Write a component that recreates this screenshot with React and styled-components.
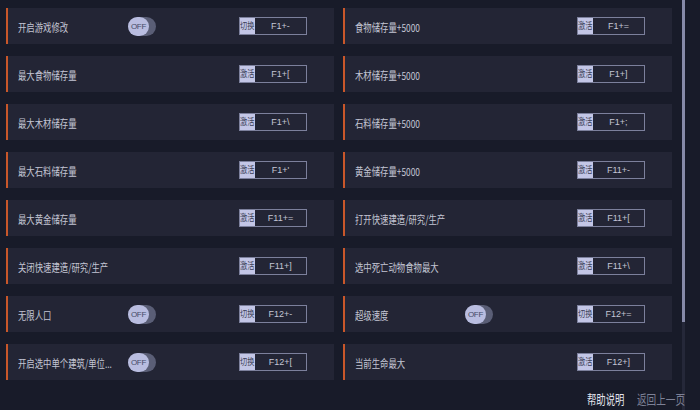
import React from 'react'
import styled, { createGlobalStyle } from 'styled-components'

const GlobalStyle = createGlobalStyle`
html, body {
    margin: 0;
    padding: 0;
    background: #181b29;
}
body {
    font-family: "Noto Sans CJK SC", "Noto Sans", sans-serif;
}
`

const Page = styled.div`
width: 700px;
height: 410px;
display: flex;
flex-direction: column;
background: #181b29;
overflow: hidden;
`

const Main = styled.div`
display: flex;
height: 385px;
`

const Grid = styled.div`
display: grid;
grid-template-columns: 328px 329px;
grid-auto-rows: 36px;
column-gap: 9px;
row-gap: 12px;
padding: 8px 0 0 6px;
`

const Scrollbar = styled.div`
margin-left: 10px;
width: 3px;
height: 410px;
background: #252839;
display: flex;
flex-direction: column;
`

const Thumb = styled.div`
height: 322px;
background: #868aa8;
`

const Row = styled.div`
display: flex;
align-items: center;
background: #232535;
`

const Bar = styled.div`
width: 2px;
align-self: stretch;
background: #c9572a;
`

const Label = styled.div`
width: 110px;
padding-left: 10px;
margin-top: -2px;
flex-shrink: 0;
white-space: nowrap;
`

const Squeeze = styled.span`
display: inline-block;
white-space: nowrap;
font-size: ${p => p.size || 11}px;
color: ${p => p.color || '#c4c6d4'};
transform: scaleX(${p => p.sx || 0.76});
transform-origin: left center;
line-height: 1;
`

const Toggle = styled.div`
width: 28px;
height: 19px;
border-radius: 10px;
background: #5a5e76;
display: flex;
align-items: center;
`

const Knob = styled.div`
width: 21px;
height: 19px;
border-radius: 10px;
background: #b9bde0;
display: flex;
align-items: center;
justify-content: center;
font-size: 8px;
color: #454a66;
font-family: "Liberation Sans", sans-serif;
letter-spacing: -0.3px;
`

const Hotkey = styled.div`
margin-left: auto;
margin-right: 27px;
width: 68px;
height: 18px;
display: flex;
border: 1px solid #7c809c;
box-sizing: border-box;
`

const HotkeyTag = styled.div`
width: 15px;
background: #c3c6e6;
display: flex;
align-items: center;
white-space: nowrap;
`

const HotkeyKeys = styled.div`
flex: 1;
display: flex;
align-items: center;
justify-content: center;
font-family: "Liberation Sans", sans-serif;
font-size: 9px;
color: #c4c6d4;
`

const Footer = styled.div`
flex: 1;
display: flex;
justify-content: flex-end;
align-items: center;
gap: 13px;
padding-right: 15px;
padding-bottom: 6px;
`

const FooterLink = styled.div`
width: ${p => p.w}px;
white-space: nowrap;
`

const left = [
    { name: '开启游戏修改', toggle: true, tag: '切换', key: 'F1+-' },
    { name: '最大食物储存量', tag: '激活', key: 'F1+[' },
    { name: '最大木材储存量', tag: '激活', key: 'F1+\\' },
    { name: '最大石料储存量', tag: '激活', key: "F1+'" },
    { name: '最大黄金储存量', tag: '激活', key: 'F11+=' },
    { name: '关闭快速建造/研究/生产', tag: '激活', key: 'F11+]' },
    { name: '无限人口', toggle: true, tag: '切换', key: 'F12+-' },
    { name: '开启选中单个建筑/单位...', toggle: true, tag: '切换', key: 'F12+[' },
]

const right = [
    { name: '食物储存量+5000', tag: '激活', key: 'F1+=' },
    { name: '木材储存量+5000', tag: '激活', key: 'F1+]' },
    { name: '石料储存量+5000', tag: '激活', key: 'F1+;' },
    { name: '黄金储存量+5000', tag: '激活', key: 'F11+-' },
    { name: '打开快速建造/研究/生产', tag: '激活', key: 'F11+[' },
    { name: '选中死亡动物食物最大', tag: '激活', key: 'F11+\\' },
    { name: '超级速度', toggle: true, tag: '切换', key: 'F12+=' },
    { name: '当前生命最大', tag: '激活', key: 'F12+]' },
]

const Item = ({ item }) => (
    <Row>
        <Bar />
        <Label><Squeeze>{item.name}</Squeeze></Label>
        {item.toggle && (
            <Toggle>
                <Knob>OFF</Knob>
            </Toggle>
        )}
        <Hotkey>
            <HotkeyTag>
                <Squeeze size={9.5} sx={0.75} color='#3b3f58'>{item.tag}</Squeeze>
            </HotkeyTag>
            <HotkeyKeys>{item.key}</HotkeyKeys>
        </Hotkey>
    </Row>
)

export default function App() {
    const cells = []
    left.forEach((l, i) => {
        cells.push(<Item key={'l' + i} item={l} />)
        cells.push(<Item key={'r' + i} item={right[i]} />)
    })

    return (
        <Page>
            <GlobalStyle />
            <Main>
                <Grid>{cells}</Grid>
                <Scrollbar><Thumb /></Scrollbar>
            </Main>
            <Footer>
                <FooterLink w={37}><Squeeze size={13} sx={0.72} color='#e4e5ee'>帮助说明</Squeeze></FooterLink>
                <FooterLink w={48}><Squeeze size={13} sx={0.74} color='#7d8196'>返回上一页</Squeeze></FooterLink>
            </Footer>
        </Page>
    )
}
